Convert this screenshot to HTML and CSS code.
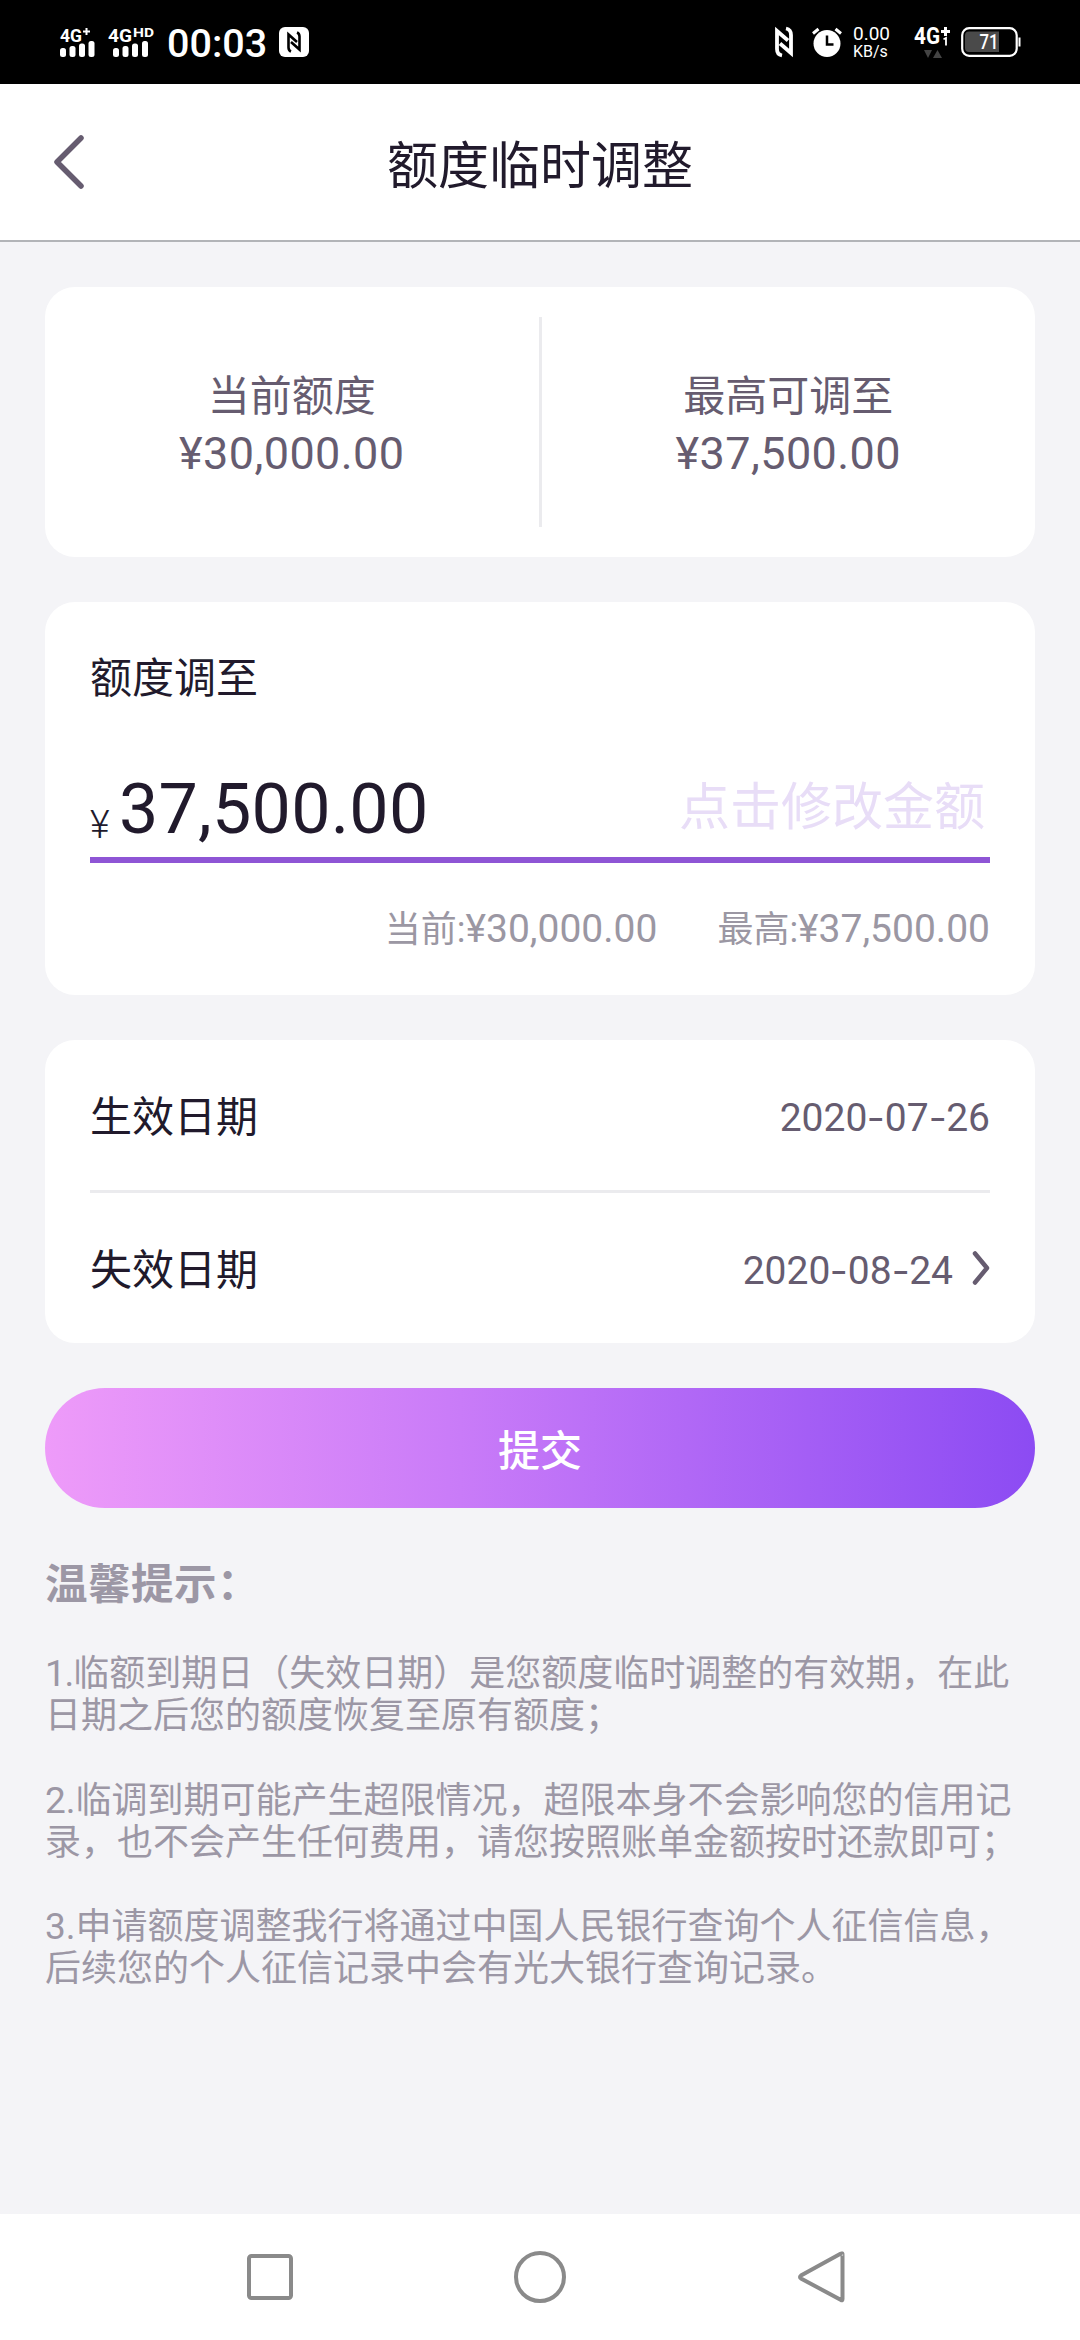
FILE: index.html
```html
<!DOCTYPE html>
<html lang="zh-CN">
<head>
<meta charset="utf-8">
<title>额度临时调整</title>
<link rel="stylesheet" href="styles.css">
</head>
<body>
<div class="status">
  <div class="status-group">
    <svg class="signal" width="37" height="32" viewBox="0 0 37 32">
      <text x="1" y="14.5" font-size="19" textLength="22" lengthAdjust="spacingAndGlyphs">4G</text>
      <path d="M24 4.500h7M27.500 1v7" stroke="#fff" stroke-width="2"/>
      <rect x="1" y="21" width="6" height="9" rx="2.500"/><rect x="10.500" y="19" width="6" height="11" rx="2.500"/><rect x="20" y="16.500" width="6" height="13.500" rx="2.500"/><rect x="29.500" y="14" width="6" height="16" rx="2.500"/>
    </svg>
    <svg class="signal signal-hd" width="48" height="32" viewBox="0 0 48 32">
      <text x="1" y="14.500" font-size="19" textLength="24" lengthAdjust="spacingAndGlyphs">4G</text>
      <text x="26" y="10" font-size="13" textLength="21" lengthAdjust="spacingAndGlyphs">HD</text>
      <rect x="6" y="21" width="6" height="9" rx="2.500"/><rect x="15.500" y="19" width="6" height="11" rx="2.500"/><rect x="25" y="16.500" width="6" height="13.500" rx="2.500"/><rect x="35" y="14" width="6" height="16" rx="2.500"/>
    </svg>
    <span class="clock">00:03</span>
    <svg width="30" height="30" viewBox="0 0 30 30">
      <rect width="30" height="30" rx="6" fill="#fff"/>
      <path d="M12 24.500 Q9.500 23.500 9.500 20.500 V7.500 L18 15 M18 5.500 Q20.500 6.500 20.500 9.500 V22.500 L12 15" fill="none" stroke="#000" stroke-width="2.600"/>
    </svg>
  </div>
  <div class="status-group">
    <svg width="18" height="30" viewBox="0 0 18 30">
      <path d="M7 28.500 Q2 27.500 2 22 V4 L13 13.500 M11 1.500 Q16 2.500 16 8 V26 L5 16.500" fill="none" stroke="#fff" stroke-width="3.800"/>
    </svg>
    <svg class="alarm" width="30" height="30" viewBox="0 0 30 30">
      <circle cx="15" cy="16.500" r="13.500" fill="#fff"/>
      <path d="M1 6.500 L6.500 2 M29 6.500 L23.500 2" stroke="#fff" stroke-width="3"/>
      <path d="M15 8.500V17.500H21.500" fill="none" stroke="#000" stroke-width="2.500"/>
    </svg>
    <div class="speed"><span class="speed-value">0.00</span><span class="speed-unit">KB/s</span></div>
    <svg class="signal network" width="38" height="34" viewBox="0 0 38 34">
      <text x="0" y="17" font-size="23.500" textLength="26" lengthAdjust="spacingAndGlyphs">4G</text>
      <path d="M27 4.500h9M31.500 0v9" stroke="#fff" stroke-width="3"/>
      <path d="M29.500 12.200l2.500-1.200v7.500" fill="none" stroke="#fff" stroke-width="1.800"/>
      <path d="M10 23h8l-4 8zM19 31h9l-4.500-8z" fill="#444"/>
    </svg>
    <svg width="60" height="30" viewBox="0 0 60 30">
      <rect x="1.200" y="1.200" width="54.500" height="27.600" rx="7" fill="none" stroke="#fff" stroke-width="2.200"/>
      <path d="M8 4.500H38V25H8Q4 25 4 21V8.500Q4 4.500 8 4.500Z" fill="#4a4a4a"/>
      <path d="M58.500 10.500v9" stroke="#fff" stroke-width="2"/>
      <text x="18.500" y="22" font-size="20" font-weight="500" fill="#fff" textLength="19" lengthAdjust="spacingAndGlyphs">71</text>
    </svg>
  </div>
</div>

<header class="header">
  <svg class="back" width="36" height="60" viewBox="0 0 36 60"><path d="M30 6 L6 30 L30 54" fill="none" stroke="#665c70" stroke-width="5.500" stroke-linecap="round" stroke-linejoin="round"/></svg>
  <h1 class="title">额度临时调整</h1>
</header>

<main class="content">
  <section class="card limits">
    <div class="limit"><div>当前额度</div><div class="limit-value">¥30,000.00</div></div>
    <div class="limit-divider"></div>
    <div class="limit"><div>最高可调至</div><div class="limit-value">¥37,500.00</div></div>
  </section>

  <section class="card adjust">
    <div class="label">额度调至</div>
    <div class="amount">
      <span class="currency">¥</span><span class="amount-value">37,500.00</span>
      <span class="hint">点击修改金额</span>
    </div>
    <div class="range">
      <span>当前:<span class="num">¥30,000.00</span></span>
      <span>最高:<span class="num">¥37,500.00</span></span>
    </div>
  </section>

  <section class="card dates">
    <div class="row"><span class="label">生效日期</span><span class="date">2020<i>-</i>07<i>-</i>26</span></div>
    <div class="row"><span class="label">失效日期</span><span class="date">2020<i>-</i>08<i>-</i>24</span>
      <svg class="more" width="18" height="36" viewBox="0 0 18 36"><path d="M3 3.500 L15 18 L3 32.500" fill="none" stroke="#665c70" stroke-width="4.500" stroke-linecap="round" stroke-linejoin="round"/></svg>
    </div>
  </section>

  <button class="submit">提交</button>

  <section class="tips">
    <h2 class="tips-title">温馨提示：</h2>
    <p><span class="num first">1.</span>临额到期日（失效日期）是您额度临时调整的有效期，在此<br>日期之后您的额度恢复至原有额度；</p>
    <p><span class="num">2.</span>临调到期可能产生超限情况，超限本身不会影响您的信用记<br>录，也不会产生任何费用，请您按照账单金额按时还款即可；</p>
    <p><span class="num">3.</span>申请额度调整我行将通过中国人民银行查询个人征信信息，<br>后续您的个人征信记录中会有光大银行查询记录。</p>
  </section>
</main>

<nav class="nav">
  <svg width="54" height="54" viewBox="0 0 54 54"><rect x="6" y="6" width="42" height="42" rx="2.500"/></svg>
  <svg width="54" height="54" viewBox="0 0 54 54"><circle cx="27" cy="27" r="24"/></svg>
  <svg class="nav-back" width="54" height="54" viewBox="0 0 54 54"><path d="M46 3.500 Q46.500 3 46.500 5 V49 Q46.500 51 45 50 L5 28.500 Q3 27 5 25.500 L44.500 3.800 Q46 3 46.500 4.500Z"/></svg>
</nav>
</body>
</html>
```
FILE: styles.css
```css
* { box-sizing: border-box; }

body {
  margin: 0;
  width: 1080px;
  height: 2340px;
  display: flex;
  flex-direction: column;
  overflow: hidden;
  background: #f4f4f7;
  font-family: Roboto, "Noto Sans CJK SC", sans-serif;
  font-size: 42px;
  color: #211a2c;
}

svg { display: block; flex: none; overflow: visible; }

.status {
  height: 84px;
  flex: none;
  display: flex;
  justify-content: space-between;
  padding: 27px 59px 0 59px;
  background: #000;
  color: #fff;
}
.status-group { display: flex; align-items: flex-start; }
.signal { fill: #fff; font-weight: 700; }
.signal-hd { margin-left: 11px; }
.clock {
  margin: -6px 13px 0 12px;
  width: 99px;
  font-size: 39.500px;
  font-weight: 500;
  line-height: 46px;
}
.alarm { margin-left: 19px; }
.speed {
  display: flex;
  flex-direction: column;
  gap: 1px;
  width: 37px;
  margin: -4px 0 0 11px;
}
.speed-value { font-size: 19px; line-height: 22px; }
.speed-unit { font-size: 16px; line-height: 11px; white-space: nowrap; }
.network { margin: 0 9px 0 24px; }

.header {
  height: 158px;
  flex: none;
  display: flex;
  align-items: center;
  padding: 0 87px 0 51px;
  background: #fff;
  border-bottom: 2px solid #b2b4b8;
}
.title {
  flex: 1;
  margin: 0;
  font-size: 51px;
  font-weight: 400;
  text-align: center;
}

.content {
  flex: 1;
  display: flex;
  flex-direction: column;
  gap: 45px;
  padding: 45px 45px 0;
}
.card { background: #fff; border-radius: 30px; }

.limits { height: 270px; display: flex; align-items: center; color: #665c70; }
.limit { flex: 1; text-align: center; line-height: 57px; margin-top: 6px; }
.limit-value { font-size: 45px; letter-spacing: .4px; }
.limit-divider { width: 3px; height: 210px; background: #ebebee; }

.adjust { height: 393px; padding: 47px 45px 0; }
.label { line-height: 60px; }
.amount {
  display: flex;
  align-items: baseline;
  height: 105px;
  margin-top: 49px;
  padding-right: 5px;
  border-bottom: 6px solid #8e55d5;
  line-height: 102px;
}
.currency { width: 29px; font-size: 38px; font-weight: 300; position: relative; top: 5px; }
.amount-value { font-size: 70px; letter-spacing: .2px; }
.hint { margin-left: auto; font-size: 51px; color: #e8ddf7; position: relative; top: -8px; }
.range {
  display: flex;
  justify-content: flex-end;
  gap: 60px;
  margin-top: 36px;
  font-size: 36px;
  line-height: 60px;
  color: #9b97a3;
}
.num { font-size: 39px; }

.dates { height: 303px; padding: 0 45px; }
.row { display: flex; align-items: center; height: 150px; padding-top: 6px; }
.row + .row { border-top: 3px solid #ebebee; height: 153px; }
.date { margin-left: auto; font-size: 39px; color: #665c70; }
.date i { display: inline-block; width: 17.500px; font-style: normal; text-align: center; transform: scaleX(1.35); }
.more { margin: -6px 0 0 19px; }

.submit {
  height: 120px;
  flex: none;
  border: 0;
  border-radius: 60px;
  background: linear-gradient(90deg, #ee9bf9, #c97bf8 42%, #8c4bf3);
  color: #fff;
  font: inherit;
  font-weight: 500;
  padding: 0 0 1px;
}

.tips { margin-top: 2px; color: #9c97a5; font-size: 36px; line-height: 42.200px; }
.tips-title { margin: 0; font-size: 42.500px; font-weight: 700; line-height: 60px; letter-spacing: .5px; }
.tips p { margin: 0 0 42.200px; white-space: nowrap; }
.tips-title + p { margin-top: 38px; }
.tips .num { font-size: 37px; line-height: 1; }
.tips .first { letter-spacing: -1.200px; }

.nav {
  height: 126px;
  flex: none;
  display: flex;
  gap: 216px;
  padding: 36px 0 0 243px;
  background: #fff;
}
.nav svg { fill: none; stroke: #8a8a8a; stroke-width: 4; }
.nav .nav-back { margin-left: 13px; }
```
